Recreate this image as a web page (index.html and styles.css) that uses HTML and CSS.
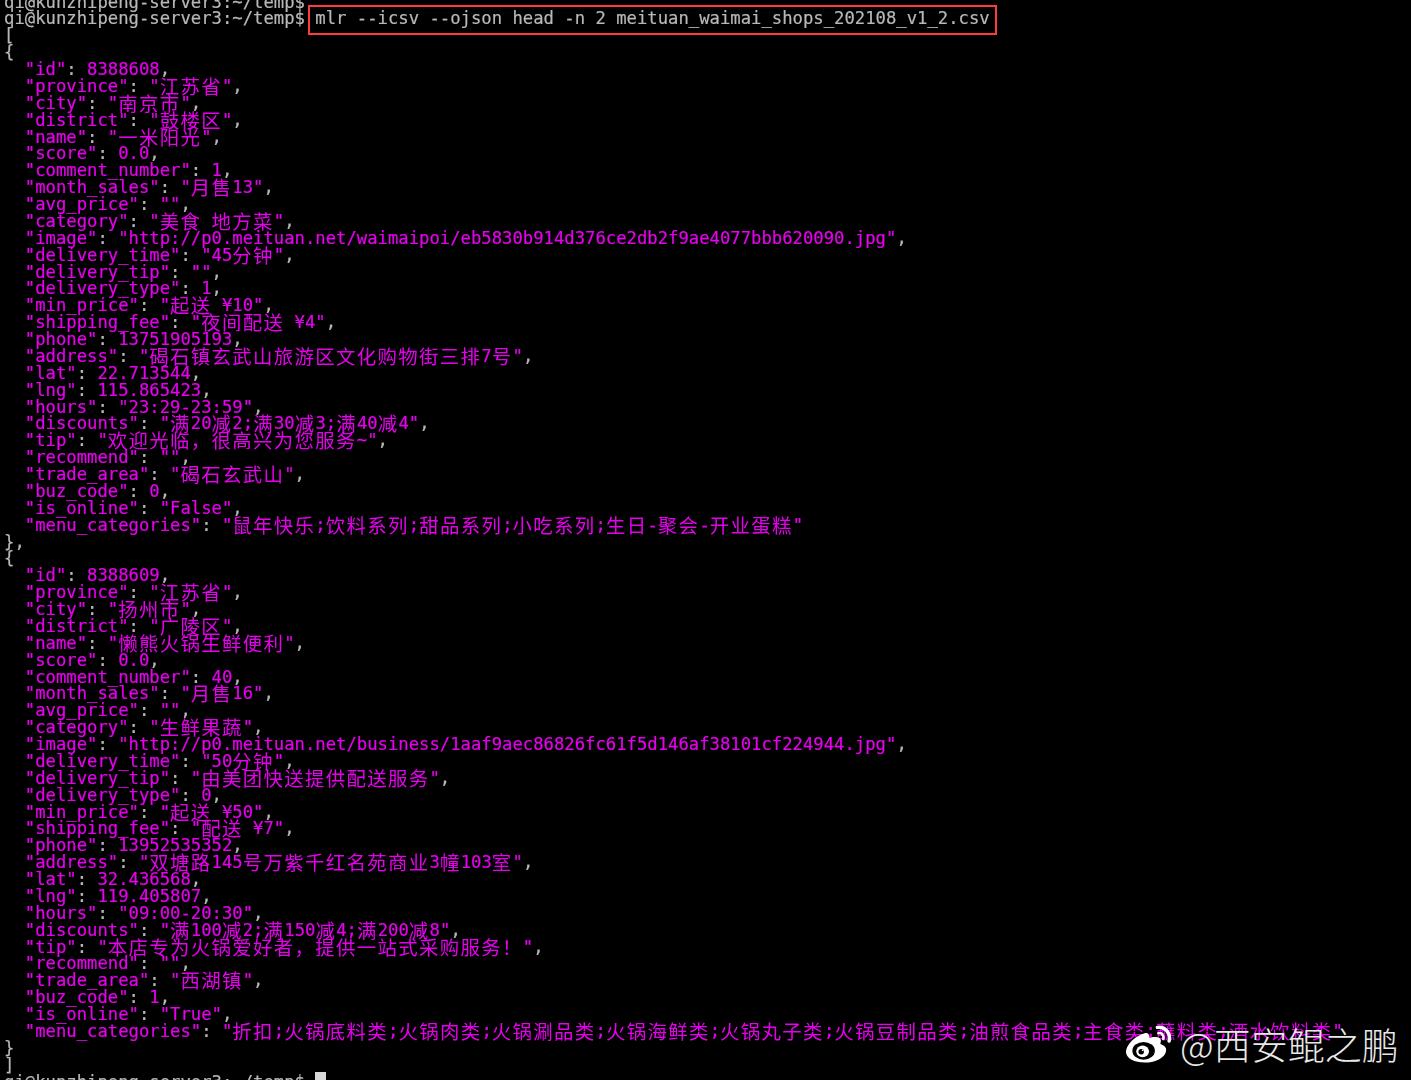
FILE: index.html
```html
<!DOCTYPE html>
<html lang="zh-CN">
<head>
<meta charset="utf-8">
<title>terminal</title>
<link rel="stylesheet" href="styles.css">
</head>
<body>
<main class="screen">
<pre class="term">qi@kunzhipeng-server3:~/temp$
qi@kunzhipeng-server3:~/temp$ <span class="cmd">mlr --icsv --ojson head -n 2 meituan_waimai_shops_202108_v1_2.csv</span>
[
{
  <b>"id"</b>: <b>8388608</b>,
  <b>"province"</b>: <b>"<i>江苏省</i>"</b>,
  <b>"city"</b>: <b>"<i>南京市</i>"</b>,
  <b>"district"</b>: <b>"<i>鼓楼区</i>"</b>,
  <b>"name"</b>: <b>"<i>一米阳光</i>"</b>,
  <b>"score"</b>: <b>0.0</b>,
  <b>"comment_number"</b>: <b>1</b>,
  <b>"month_sales"</b>: <b>"<i>月售</i>13"</b>,
  <b>"avg_price"</b>: <b>""</b>,
  <b>"category"</b>: <b>"<i>美食</i> <i>地方菜</i>"</b>,
  <b>"image"</b>: <b>"http://p0.meituan.net/waimaipoi/eb5830b914d376ce2db2f9ae4077bbb620090.jpg"</b>,
  <b>"delivery_time"</b>: <b>"45<i>分钟</i>"</b>,
  <b>"delivery_tip"</b>: <b>""</b>,
  <b>"delivery_type"</b>: <b>1</b>,
  <b>"min_price"</b>: <b>"<i>起送</i> ¥10"</b>,
  <b>"shipping_fee"</b>: <b>"<i>夜间配送</i> ¥4"</b>,
  <b>"phone"</b>: <b>13751905193</b>,
  <b>"address"</b>: <b>"<i>碣石镇玄武山旅游区文化购物街三排</i>7<i>号</i>"</b>,
  <b>"lat"</b>: <b>22.713544</b>,
  <b>"lng"</b>: <b>115.865423</b>,
  <b>"hours"</b>: <b>"23:29-23:59"</b>,
  <b>"discounts"</b>: <b>"<i>满</i>20<i>减</i>2;<i>满</i>30<i>减</i>3;<i>满</i>40<i>减</i>4"</b>,
  <b>"tip"</b>: <b>"<i>欢迎光临，很高兴为您服务</i>~"</b>,
  <b>"recommend"</b>: <b>""</b>,
  <b>"trade_area"</b>: <b>"<i>碣石玄武山</i>"</b>,
  <b>"buz_code"</b>: <b>0</b>,
  <b>"is_online"</b>: <b>"False"</b>,
  <b>"menu_categories"</b>: <b>"<i>鼠年快乐</i>;<i>饮料系列</i>;<i>甜品系列</i>;<i>小吃系列</i>;<i>生日</i>-<i>聚会</i>-<i>开业蛋糕</i>"</b>
},
{
  <b>"id"</b>: <b>8388609</b>,
  <b>"province"</b>: <b>"<i>江苏省</i>"</b>,
  <b>"city"</b>: <b>"<i>扬州市</i>"</b>,
  <b>"district"</b>: <b>"<i>广陵区</i>"</b>,
  <b>"name"</b>: <b>"<i>懒熊火锅生鲜便利</i>"</b>,
  <b>"score"</b>: <b>0.0</b>,
  <b>"comment_number"</b>: <b>40</b>,
  <b>"month_sales"</b>: <b>"<i>月售</i>16"</b>,
  <b>"avg_price"</b>: <b>""</b>,
  <b>"category"</b>: <b>"<i>生鲜果蔬</i>"</b>,
  <b>"image"</b>: <b>"http://p0.meituan.net/business/1aaf9aec86826fc61f5d146af38101cf224944.jpg"</b>,
  <b>"delivery_time"</b>: <b>"50<i>分钟</i>"</b>,
  <b>"delivery_tip"</b>: <b>"<i>由美团快送提供配送服务</i>"</b>,
  <b>"delivery_type"</b>: <b>0</b>,
  <b>"min_price"</b>: <b>"<i>起送</i> ¥50"</b>,
  <b>"shipping_fee"</b>: <b>"<i>配送</i> ¥7"</b>,
  <b>"phone"</b>: <b>13952535352</b>,
  <b>"address"</b>: <b>"<i>双塘路</i>145<i>号万紫千红名苑商业</i>3<i>幢</i>103<i>室</i>"</b>,
  <b>"lat"</b>: <b>32.436568</b>,
  <b>"lng"</b>: <b>119.405807</b>,
  <b>"hours"</b>: <b>"09:00-20:30"</b>,
  <b>"discounts"</b>: <b>"<i>满</i>100<i>减</i>2;<i>满</i>150<i>减</i>4;<i>满</i>200<i>减</i>8"</b>,
  <b>"tip"</b>: <b>"<i>本店专为火锅爱好者，提供一站式采购服务！</i>"</b>,
  <b>"recommend"</b>: <b>""</b>,
  <b>"trade_area"</b>: <b>"<i>西湖镇</i>"</b>,
  <b>"buz_code"</b>: <b>1</b>,
  <b>"is_online"</b>: <b>"True"</b>,
  <b>"menu_categories"</b>: <b>"<i>折扣</i>;<i>火锅底料类</i>;<i>火锅肉类</i>;<i>火锅涮品类</i>;<i>火锅海鲜类</i>;<i>火锅丸子类</i>;<i>火锅豆制品类</i>;<i>油煎食品类</i>;<i>主食类</i>;<i>蘸料类</i>;<i>酒水饮料类</i>"</b>
}
]
qi@kunzhipeng-server3:~/temp$ <span class="cursor"> </span></pre>
<div class="mark">
<svg class="weibo" viewBox="0 0 50 40" aria-hidden="true">
<path class="logo-fill" d="M20 9C10 12 1 21 1 28c0 7 9 11 19 11 12 0 22-6 22-13 0-4-4-5-6-6 1-3 1-5-1-6-3-2-8-1-10 0 0-3-1-6-5-5z"/>
<ellipse class="logo-hole" cx="19" cy="27" rx="11.5" ry="9"/>
<ellipse class="logo-fill" cx="18" cy="27.500" rx="6.500" ry="6"/>
<circle class="logo-hole" cx="16.500" cy="28" r="2.800"/>
<circle class="logo-fill" cx="18" cy="26.500" r="0.900"/>
<path class="logo-arc" d="M33 3c8-1 14 6 12 14"/>
<path class="logo-arc thin" d="M34 9c4-1 6 3 5 6"/>
</svg>
<span class="handle">@西安鲲之鹏</span>
</div>
</main>
</body>
</html>
```
FILE: styles.css
```css
html, body {
  margin: 0;
  padding: 0;
  background: #000;
}
.screen {
  position: relative;
  width: 1411px;
  height: 1080px;
  overflow: hidden;
  background: #000;
}
.term {
  margin: -6.5px 0 0;
  padding: 0 0 0 4px;
  font-family: "DejaVu Sans Mono", monospace;
  font-size: 17.24px;
  line-height: 16.87px;
  color: #b8b8b8;
  -webkit-text-stroke: 0.2px currentColor;
  filter: blur(0.35px);
}
.term b {
  font-weight: 400;
  color: #e600ee;
}
.term i {
  font-style: normal;
  font-family: "Noto Sans CJK SC", sans-serif;
  font-size: 19.4px;
  letter-spacing: 1.36px;
  line-height: 0;
  vertical-align: -2px;
  -webkit-text-stroke: 0;
}
.cmd {
  position: relative;
}
.cmd::after {
  content: "";
  position: absolute;
  left: -7px;
  right: -7px;
  top: -3.5px;
  bottom: -6.5px;
  border: 2px solid #ff3b3b;
}
.cursor {
  background: #d8d8d8;
}
.mark {
  position: absolute;
  left: 1125px;
  top: 1021px;
  display: flex;
  align-items: center;
  gap: 6px;
}
.weibo {
  width: 49px;
  height: 40px;
  flex: none;
}
.logo-fill {
  fill: #fff;
}
.logo-hole {
  fill: #000;
}
.logo-arc {
  fill: none;
  stroke: #fff;
  stroke-width: 3.500;
  stroke-linecap: round;
}
.logo-arc.thin {
  stroke-width: 2.500;
}
.handle {
  font-family: "Noto Sans CJK SC", sans-serif;
  font-size: 37px;
  line-height: 46px;
  font-weight: 300;
  color: #e8e8e8;
  letter-spacing: 0;
  white-space: nowrap;
}
```
